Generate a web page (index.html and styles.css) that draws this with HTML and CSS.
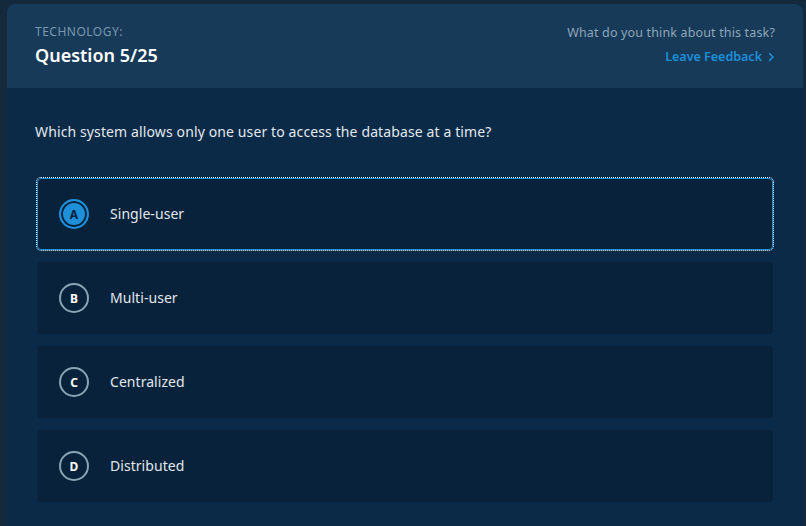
FILE: index.html
```html
<!DOCTYPE html>
<html>
<head>
<meta charset="utf-8">
<link rel="stylesheet" href="styles.css">
</head>
<body>
<div class="card">
  <div class="header">
    <div class="title-block">
      <div class="category">TECHNOLOGY:</div>
      <div class="qnum">Question 5/25</div>
    </div>
    <div class="feedback">
      <div class="feedback-q">What do you think about this task?</div>
      <a class="feedback-link">Leave Feedback <svg class="chev" width="7" height="10" viewBox="0 0 7 10"><path d="M1.5 1.5 L5 5 L1.5 8.5" fill="none" stroke="currentColor" stroke-width="1.6" stroke-linecap="round" stroke-linejoin="round"/></svg></a>
    </div>
  </div>
  <div class="body">
    <p class="question">Which system allows only one user to access the database at a time?</p>
    <div class="options">
      <div class="option selected"><span class="badge">A</span><span class="label">Single-user</span></div>
      <div class="option"><span class="badge">B</span><span class="label">Multi-user</span></div>
      <div class="option"><span class="badge">C</span><span class="label">Centralized</span></div>
      <div class="option"><span class="badge">D</span><span class="label">Distributed</span></div>
    </div>
  </div>
</div>
</body>
</html>
```
FILE: styles.css
```css
html, body {
  margin: 0;
  padding: 0;
  height: 100%;
  overflow: hidden;
}
body {
  background: #14293b;
  font-family: "Noto Sans", "Open Sans", sans-serif;
  padding: 4px 3px 0 7px;
  box-sizing: border-box;
}
.card {
  background: #0a2a47;
  border-radius: 8px 8px 0 0;
  overflow: hidden;
  height: 540px;
}
.header {
  background: #163a58;
  height: 84px;
  box-sizing: border-box;
  padding: 20px 28px 0 28px;
  display: flex;
  justify-content: space-between;
  align-items: flex-start;
}
.category {
  font-size: 12px;
  line-height: 16px;
  letter-spacing: 0.5px;
  color: #7a98b0;
}
.qnum {
  margin-top: 3px;
  font-size: 18px;
  line-height: 24px;
  font-weight: 600;
  color: #ffffff;
}
.feedback {
  display: flex;
  flex-direction: column;
  align-items: flex-end;
}
.feedback-q {
  margin-top: 1px;
  font-size: 12.5px;
  line-height: 16px;
  letter-spacing: 0.15px;
  color: #8ea6ba;
}
.feedback-link {
  margin-top: 8px;
  font-size: 12.5px;
  line-height: 16px;
  font-weight: 600;
  color: #1e8fd9;
  display: flex;
  align-items: center;
  gap: 6px;
}
.chev {
  display: block;
}
.body {
  padding: 34px 28px 0 28px;
}
.question {
  margin: 0;
  font-size: 14px;
  line-height: 20px;
  letter-spacing: 0.12px;
  color: #e2e8ee;
}
.options {
  margin: 36px 2px 0 2px;
  display: flex;
  flex-direction: column;
  gap: 12px;
}
.option {
  height: 72px;
  box-sizing: border-box;
  background: #07223a;
  border-radius: 4px;
  display: flex;
  align-items: center;
  padding-left: 21px;
  border: 1px solid transparent;
}
.option.selected {
  border-color: #1e8fd9;
  outline: 1px dotted #ffffff;
  outline-offset: 0px;
}
.badge {
  width: 30px;
  height: 30px;
  box-sizing: border-box;
  border: 2px solid #8aa4b6;
  border-radius: 50%;
  display: flex;
  align-items: center;
  justify-content: center;
  font-size: 12px;
  font-weight: 700;
  color: #ffffff;
}
.selected .badge {
  border-color: #1e8fd9;
  background: #1e8fd9;
  box-shadow: inset 0 0 0 2px #07223a;
  color: #07223a;
}
.label {
  margin-left: 21px;
  padding-bottom: 2px;
  font-size: 14px;
  letter-spacing: 0.05px;
  color: #e2e8ee;
}
```
